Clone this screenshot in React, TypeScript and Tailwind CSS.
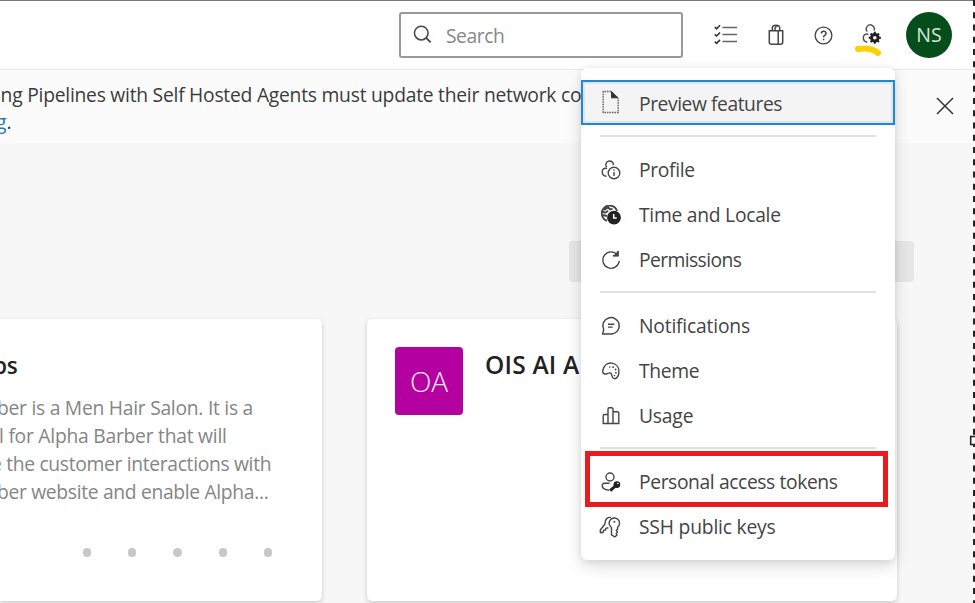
import type { ReactNode } from "react";

type IconProps = { children: ReactNode; className?: string };

function Icon({ children, className = "size-5" }: IconProps) {
  return (
    <svg viewBox="0 0 20 20" className={`shrink-0 ${className}`} fill="none" stroke="#484644" strokeWidth="1.4">
      {children}
    </svg>
  );
}

const PreviewIcon = () => (
  <svg viewBox="0 0 20 24" className="w-5 h-6 shrink-0" fill="none" stroke="#666" strokeWidth="1.5">
    <path d="M10 1.5H2.2V22.5H17.2V8" strokeDasharray="1.6 .9" />
    <path d="M10.5 1.5L17 7.8H10.5Z" fill="#333" stroke="#333" strokeWidth="1" />
  </svg>
);
const ProfileIcon = () => (
  <Icon>
    <path d="M5.7 7.2A3.8 3.8 0 1 1 12.4 5.2M6 8.6C3 7.6 1.2 9.2 1.2 11.8c0 2.8 1.8 4.4 4.3 4.4" />
    <circle cx="13" cy="13" r="5.8" />
    <path d="M13 12v4M13 9.5v1.2" />
  </Icon>
);
const LocaleIcon = () => (
  <Icon>
    <path d="M6 15.8A7.8 7.8 0 1 1 16 6M1.2 6.5C4 8 5 8 7 5.5M7 2c1 2 2.5 3 4.5 1.5M3 5l4-2.5M2 10l4 1" strokeWidth="2" />
    <circle cx="13" cy="12.7" r="6.2" fill="#222" stroke="#222" />
    <path d="M12.7 9v3.9h3" stroke="#fff" strokeWidth="1.5" />
  </Icon>
);
const PermissionsIcon = () => (
  <Icon>
    <path d="M16.7 5.3A8.2 8.2 0 1 0 18.2 11" />
    <path d="M12 5.8h5V1" strokeWidth="1.5" />
    <path d="M13.5 5.5h3.2V2.3Z" fill="#333" />
  </Icon>
);
const NotificationsIcon = () => (
  <Icon>
    <path d="M1.6 18H10a8.2 8.2 0 1 0-7.3-4.5Z" />
    <path d="M7 8.2h6.3M7 11.1h4.7" />
  </Icon>
);
const ThemeIcon = () => (
  <Icon>
    <path d="M1.8 9.7C3.1 3.6 7.2 1.5 11 2.1c4.7.8 7.4 4.6 6.9 9.5-.4 3.8-2.5 6.6-4.8 6-2.5-.7-1.8-3.4-3-5.1-.9-1.3-2.3-.5-3.7.1-2.8 1.2-5.2-.2-4.6-2.9Z" />
    <g fill="#484644" stroke="none">
      <circle cx="8.8" cy="6" r=".8" /><circle cx="12.1" cy="6.2" r=".9" /><circle cx="14.6" cy="8.5" r=".9" /><circle cx="14.9" cy="11.7" r=".9" /><circle cx="13.5" cy="14.5" r=".8" />
    </g>
  </Icon>
);
const UsageIcon = () => (
  <Icon>
    <path d="M7 17.5V3a1.2 1.2 0 0 1 1.2-1.2h2.6A1.2 1.2 0 0 1 12 3v14.5M7 8.5H3.4a1.2 1.2 0 0 0-1.2 1.2v7.8h15.6V7a1.2 1.2 0 0 0-1.2-1.2H12" />
  </Icon>
);
const TokenIcon = () => (
  <Icon>
    <circle cx="9" cy="5" r="4" />
    <path d="M8.5 11.3H3.2A2 2 0 0 0 1.2 13.3c0 3 3 4.7 7 4.9" />
    <circle cx="15.9" cy="12.6" r="2.7" fill="#222" stroke="#222" />
    <path d="M14.4 14L9.2 18.6" stroke="#222" strokeWidth="3" />
    <circle cx="16.9" cy="11.5" r=".8" fill="#fff" stroke="none" />
  </Icon>
);
const KeysIcon = () => (
  <svg viewBox="0 0 22 22" className="w-[22px] h-[22px] shrink-0 -ml-[2px]" fill="none" stroke="#484644" strokeWidth="1.4" strokeLinejoin="round">
    <path d="M12.5 11.5A5.2 5.2 0 1 1 18.6 11.2V13l-1.4 1.4 1.4 1.5-1.5 1.8.9 1.2-2.2 2-3.3-2Z" />
    <circle cx="15.4" cy="5.8" r="1" fill="#484644" stroke="none" />
    <path d="M12 1.6C9 .7 6.2 3 6.2 6.2c0 1-.2 1.7-1 2.8L1.3 14l.1 2.7 2.9-.5.2-2 2-.1.3-1.7 2.6-.7" />
  </svg>
);

const ChecklistIcon = () => (
  <svg viewBox="0 0 24 22" className="w-6 h-[22px] shrink-0" fill="none" stroke="#666" strokeWidth="1.6">
    <path d="M8.5 3.5H23M8.5 10.5H23M8.5 17.5H23" />
    <path d="M.8 3.1l1.8 1.7L6 1.3M.8 10.3l1.8 1.7L6 8.5M.8 17.7l1.8 1.7L6 15.9" stroke="#333" />
  </svg>
);
const BagIcon = () => (
  <svg viewBox="0 0 16 22" className="w-4 h-[22px] shrink-0" fill="none" stroke="#444" strokeWidth="1.5">
    <path d="M4.3 7V3.9Q4.3 1.2 8 1.2T11.7 3.9V7M7 7V4.2Q7 2.6 9.2 2.2" />
    <path d="M1.3 6.7H14.7V18.2Q14.7 20.2 12.5 20.2H3.5Q1.3 20.2 1.3 18.2ZM10.2 6.7V20.2" />
  </svg>
);
const HelpIcon = () => (
  <Icon className="w-[19px] h-[19px]">
    <circle cx="10" cy="10" r="8.8" />
    <path d="M7.7 8Q7.7 5.5 10.2 5.5T12.6 7.8Q12.6 9 11.2 9.8T10.1 12M10.1 13.4V15" strokeWidth="1.6" />
  </Icon>
);
const UserSettingsIcon = () => (
  <svg viewBox="0 0 30 34" className="w-[30px] h-[34px] shrink-0" fill="none" stroke="#555" strokeWidth="1.5">
    <path d="M13.3 7.6A4 4 0 1 1 20 6.5M14.5 10.5C11.5 9.3 9.3 11 9.3 13.7c0 2.5 1.7 4 4 4.5" />
    <g stroke="#222">
      <circle cx="20.8" cy="13.8" r="3.3" strokeWidth="3" />
      <path d="M20.8 7.8v2.5M20.8 17.3v2.5M14.7 13.8h2.5M24.4 13.8h2.5M16.6 9.6l1.6 1.6M23.4 16.4l1.6 1.6M25 9.6l-1.6 1.6M18.2 16.4l-1.6 1.6" strokeWidth="2.1" />
    </g>
    <path d="M4 24.9Q12.5 24 17 25.3T24 29" stroke="#fdd000" strokeWidth="6" strokeLinecap="round" />
  </svg>
);
const SearchIcon = () => (
  <Icon className="w-[19px] h-[19px]">
    <circle cx="8.7" cy="8.5" r="7.2" strokeWidth="1.6" />
    <path d="M13.8 13.6L18.6 18.4" strokeWidth="1.9" />
  </Icon>
);
const CloseIcon = () => (
  <svg viewBox="0 0 18 18" className="w-[18px] h-[18px]" stroke="#333" strokeWidth="1.5">
    <path d="M1 1L17 17M17 1L1 17" />
  </svg>
);

function MenuItem({ icon, label, tracking }: { icon: ReactNode; label: string; tracking: string }) {
  return (
    <div className="h-[45.2px] pl-5 flex items-center gap-[18px]">
      {icon}
      <span className={tracking}>{label}</span>
    </div>
  );
}

const Divider = ({ className }: { className: string }) => <div className={`mx-[19px] h-[2px] bg-[#e1e1e1] ${className}`} />;

function UserMenu() {
  return (
    <div className="absolute left-[581px] top-[68px] w-[314px] h-[492px] pt-3 rounded-md bg-white text-[#444] text-[19.3px] leading-[26px] shadow-[0_6px_16px_rgba(0,0,0,0.14),0_1px_6px_rgba(0,0,0,0.08)]">
      <div className="h-[45px] pl-[18px] flex items-center gap-[18px] bg-[#f4f4f4] border-2 border-[#2386d5] shadow-[inset_0_0_0_2px_#dbe8f2]">
        <div className="-mt-[2px]"><PreviewIcon /></div>
        <span className="tracking-[-0.45px] mt-[3px]">Preview features</span>
      </div>
      <Divider className="mt-[10px] mb-[10.4px]" />
      <MenuItem icon={<ProfileIcon />} label="Profile" tracking="tracking-[-0.35px]" />
      <MenuItem icon={<LocaleIcon />} label="Time and Locale" tracking="tracking-[-0.27px]" />
      <MenuItem icon={<PermissionsIcon />} label="Permissions" tracking="tracking-[-0.6px]" />
      <Divider className="mt-[8px] mb-[10.4px]" />
      <MenuItem icon={<NotificationsIcon />} label="Notifications" tracking="tracking-[-0.2px]" />
      <MenuItem icon={<ThemeIcon />} label="Theme" tracking="tracking-[-0.35px]" />
      <MenuItem icon={<UsageIcon />} label="Usage" tracking="tracking-[-0.2px]" />
      <Divider className="mt-[8px] mb-[10.4px]" />
      <MenuItem icon={<TokenIcon />} label="Personal access tokens" tracking="tracking-[-0.4px]" />
      <MenuItem icon={<KeysIcon />} label="SSH public keys" tracking="tracking-[-0.2px]" />
      <div className="absolute left-[4px] top-[383px] w-[302.5px] h-[56px] border-[5px] border-[#e81c1f]" />
    </div>
  );
}

function SelectionEdge() {
  return (
    <svg className="absolute right-0 top-0 w-[6px] h-[603px]" viewBox="0 0 6 603" fill="none">
      <path d="M5 0V603" stroke="#222" strokeWidth="2" strokeDasharray="6 6.25" />
      <rect x="1.7" y="436.5" width="8" height="8" fill="#fff" stroke="#222" strokeWidth="1.6" />
    </svg>
  );
}

export default function App() {
  return (
    <div className="relative w-[975px] h-[603px] overflow-hidden bg-[#f7f7f7] whitespace-nowrap [font-family:'Open_Sans','Noto_Sans',sans-serif]">
      <header className="h-[70px] flex items-center bg-white border-t border-t-[#777] border-b border-b-[#e9e9e9]">
        <div className="ml-[399px] w-[284px] h-[46px] pl-[12px] flex items-center gap-[14px] border-2 border-[#999] rounded-[3px] text-[19.3px] text-[#888]">
          <div className="-mt-[2px]"><SearchIcon /></div>
          <span className="tracking-[-0.45px] pt-[3px]">Search</span>
        </div>
        <div className="ml-[31px] flex items-center">
          <ChecklistIcon />
          <div className="ml-[30px] flex"><BagIcon /></div>
          <div className="ml-[30px] flex"><HelpIcon /></div>
          <div className="ml-[21px] mt-[12px] flex"><UserSettingsIcon /></div>
        </div>
        <div className="ml-[22px] size-[46px] rounded-full bg-[#054d1b] text-[#d9e5dc] text-[19.5px] flex items-center justify-center">NS</div>
      </header>

      <section className="h-[73px] pt-[11px] flex justify-between bg-[#fbfbfb] text-[#3b3b3b] text-[19.3px] leading-[27px]">
        <div className="w-[582px] overflow-hidden">
          <p className="-ml-[4px] tracking-[-0.25px]">ing Pipelines with Self Hosted Agents must update their network co</p>
          <p className="-ml-[4px]"><span className="text-[#2878b0]">g</span>.</p>
        </div>
        <div className="mr-[21px] mt-[16px]"><CloseIcon /></div>
      </section>

      <div className="mt-[98px] ml-[569px] w-[345px] h-[41px] rounded-[4px] bg-[#e6e6e6]" />

      <main className="mt-[36.5px] flex gap-[45px]">
        <article className="w-[322px] h-[282px] shrink-0 rounded-r-[5px] bg-white shadow-[0_2px_5px_rgba(0,0,0,0.18)] overflow-hidden">
          <h2 className="mt-[31px] -ml-[7px] text-[22.5px] leading-[32px] font-semibold text-[#222] tracking-[-0.35px]">ps</h2>
          <div className="mt-[12px] text-[19.3px] leading-[28.2px] text-[#858585]">
            <p className="-ml-[3px] tracking-[-0.27px]">ber is a Men Hair Salon. It is a</p>
            <p className="-ml-[1px] tracking-[-0.25px]">l for Alpha Barber that will</p>
            <p className="-ml-[9px] tracking-[-0.33px]">e the customer interactions with</p>
            <p className="-ml-[3px] tracking-[-0.33px]">ber website and enable Alpha...</p>
          </div>
          <div className="mt-[42px] ml-[83px] flex gap-[37px]">
            {[0, 1, 2, 3, 4].map((i) => <span key={i} className="size-[8.2px] rounded-full bg-[#c8c8c8]" />)}
          </div>
        </article>
        <article className="w-[530px] h-[282px] shrink-0 pl-[28px] pt-[28px] flex gap-[22px] rounded-[5px] bg-white shadow-[0_2px_5px_rgba(0,0,0,0.18)]">
          <div className="size-[68px] rounded-[4px] bg-[#b4009e] text-[#fbe9f8] text-[28px] font-light flex items-center justify-center">OA</div>
          <h2 className="mt-[2px] w-[96px] overflow-hidden text-[24.5px] leading-[32px] font-semibold text-[#222] tracking-[0.2px]">OIS AI A</h2>
        </article>
      </main>

      <UserMenu />
      <SelectionEdge />
    </div>
  );
}
